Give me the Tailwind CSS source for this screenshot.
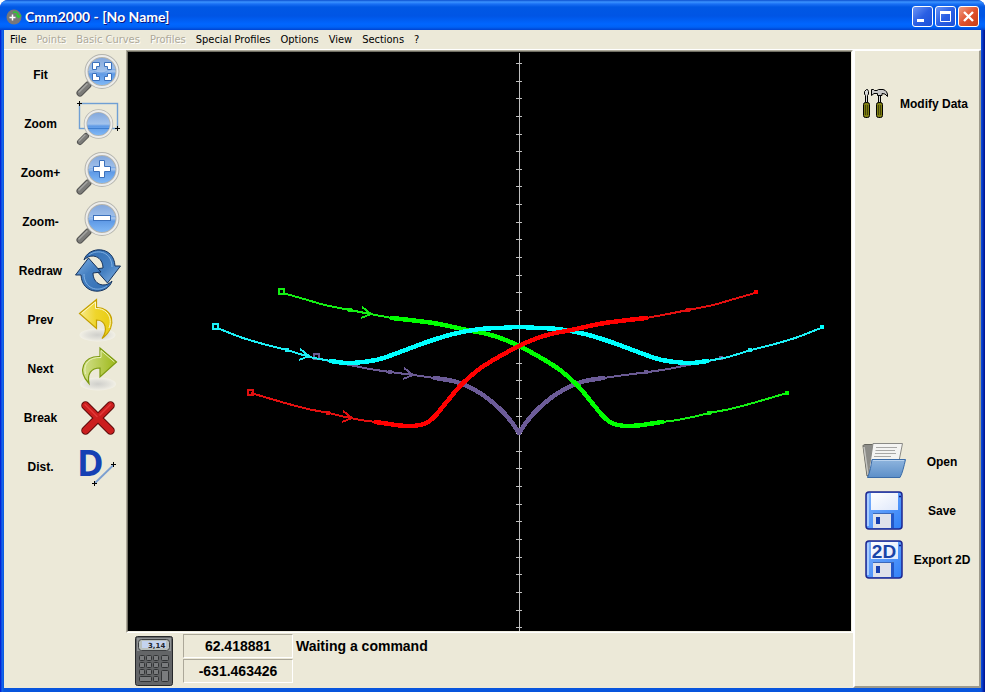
<!DOCTYPE html>
<html lang="en">
<head>
    <meta charset="UTF-8">
    <meta name="viewport" content="width=device-width, initial-scale=1.0">
    <title>Cmm2000 - [No Name]</title>
    <script src="https://cdn.jsdelivr.net/npm/@tailwindcss/browser@4"></script>
</head>
<body class="bg-white font-['Liberation_Sans',Arial,sans-serif] text-black">

    <!-- Shared gradients and symbols -->
    <svg class="absolute h-0 w-0" aria-hidden="true">
        <defs>
            <linearGradient id="glass" x1="0" y1="0" x2="0" y2="1">
                <stop offset="0" stop-color="#7fa4da"/>
                <stop offset=".5" stop-color="#a3c3ec"/>
                <stop offset=".58" stop-color="#5f9ae6"/>
                <stop offset="1" stop-color="#86bdf8"/>
            </linearGradient>
            <linearGradient id="blueArrow" x1="0" y1="0" x2="1" y2="1">
                <stop offset="0" stop-color="#2f6bb0"/>
                <stop offset=".6" stop-color="#4580c2"/>
                <stop offset="1" stop-color="#86b4e4"/>
            </linearGradient>
            <linearGradient id="yellowArrow" x1="0" y1="0" x2="1" y2="0">
                <stop offset="0" stop-color="#f8ea8c"/>
                <stop offset=".5" stop-color="#efd52c"/>
                <stop offset="1" stop-color="#e8cc10"/>
            </linearGradient>
            <linearGradient id="greenArrow" x1="0" y1="0" x2="1" y2="0">
                <stop offset="0" stop-color="#d3e08c"/>
                <stop offset="1" stop-color="#9cb818"/>
            </linearGradient>
            <linearGradient id="folderFront" x1="0" y1="0" x2="0" y2="1">
                <stop offset="0" stop-color="#8fb5de"/>
                <stop offset="1" stop-color="#5c8fc8"/>
            </linearGradient>
            <linearGradient id="disk" x1="0" y1="0" x2="1" y2="1">
                <stop offset="0" stop-color="#7fb2fc"/>
                <stop offset="1" stop-color="#2f80f8"/>
            </linearGradient>
            <linearGradient id="paper" x1="0" y1="0" x2="1" y2="1">
                <stop offset="0" stop-color="#ffffff"/>
                <stop offset="1" stop-color="#dfe8fb"/>
            </linearGradient>
            <radialGradient id="shade">
                <stop offset="0" stop-color="#cfcfcb"/>
                <stop offset=".6" stop-color="#e2e1da"/>
                <stop offset="1" stop-color="#f2f0e6"/>
            </radialGradient>
            <symbol id="lens" viewBox="0 0 46 49">
                <path d="M13 34L5 42" stroke="#555553" stroke-width="7" stroke-linecap="round"/>
                <path d="M13 34L5 42" stroke="#7c7c79" stroke-width="5" stroke-linecap="round"/>
                <path d="M12 33L4 41" stroke="#a5a5a2" stroke-width="1.500" stroke-linecap="round"/>
                <circle cx="27" cy="20.500" r="15.500" fill="url(#glass)" stroke="#b4b4ae" stroke-width="4"/>
                <circle cx="27" cy="20.500" r="15.500" fill="none" stroke="#ececea" stroke-width="2"/>
                <path d="M13 21C18 17 23 24 28 22S37 17 41 19" fill="none" stroke="#5b95e2" stroke-width="1" opacity=".5"/>
            </symbol>
            <symbol id="floppy" viewBox="0 0 46 49">
                <rect x="5" y="6" width="36" height="37" rx="3" fill="url(#disk)" stroke="#1c2690" stroke-width="1.500"/>
                <path d="M7 8V40" stroke="#a8ccff" stroke-width="2"/>
                <rect x="12" y="28" width="20" height="14" fill="#dfe2ea"/>
                <path d="M12 27.500H33" stroke="#3c68b8"/>
                <rect x="15" y="31" width="4" height="7" fill="#1840b0"/>
                <rect x="30" y="28" width="3" height="14" fill="#2458c8"/>
                <path d="M38 10.500H40" stroke="#141c80" stroke-width="1.500"/>
            </symbol>
        </defs>
    </svg>

    <div class="flex min-h-screen flex-col rounded-t-lg bg-[linear-gradient(90deg,#0019cf_0,#0831d9_1px,#166aee_2px,#0855dd_4px,#0855dd_calc(100%-4px),#0b3fd0_calc(100%-3px),#001ea0_calc(100%-1px),#00138c_100%)]">

        <header class="flex h-[30px] shrink-0 items-center rounded-t-lg bg-[linear-gradient(180deg,#0b4fcf_0,#3b93ff_2px,#1a70f4_4px,#0058e4_7px,#0055e5_16px,#0066ff_24px,#0062f6_27px,#0043cf_30px)] pr-[6px] pl-[6px]">
            <svg class="mt-[3px] h-4 w-4" viewBox="0 0 16 16">
                <circle cx="8" cy="8" r="7.500" fill="#77777a"/>
                <path d="M6.500 5.500v6M3.500 8.500h6" stroke="#fff" stroke-width="1.500"/>
                <path d="M7 3.500C10 2 12.500 4 12.500 8M10 6L12.500 8.500L15 6" fill="none" stroke="#2fc832" stroke-width="1.500"/>
            </svg>
            <h1 class="ml-[3px] flex-1 pt-1 font-[Lato,'Open_Sans',sans-serif] text-[14px] leading-5 font-bold text-white [text-shadow:1px_1px_0_#0a1883]">Cmm2000 - [No Name]</h1>
            <div class="flex gap-[2px] pt-[3px]">
                <button type="button" aria-label="Minimize" class="h-[21px] w-[21px] rounded-[3px] border border-white bg-linear-to-br from-[#6c94f4] via-[#2a5fe4] to-[#1c50d8]">
                    <svg viewBox="0 0 19 19"><path d="M4 13.500H11" stroke="#fff" stroke-width="3"/></svg>
                </button>
                <button type="button" aria-label="Maximize" class="h-[21px] w-[21px] rounded-[3px] border border-white bg-linear-to-br from-[#6c94f4] via-[#2a5fe4] to-[#1c50d8]">
                    <svg viewBox="0 0 19 19"><path d="M4.500 5V14.500H14.500V5" fill="none" stroke="#fff"/><path d="M4 5.500H15" stroke="#fff" stroke-width="3"/></svg>
                </button>
                <button type="button" aria-label="Close" class="h-[21px] w-[21px] rounded-[3px] border border-white bg-linear-to-br from-[#ee9a80] via-[#e0512c] to-[#c83c14]">
                    <svg viewBox="0 0 19 19"><path d="M5 5L14 14M14 5L5 14" stroke="#fff" stroke-width="2.400"/></svg>
                </button>
            </div>
        </header>

        <div class="mx-1 mb-1 flex flex-1 flex-col bg-[#ece9d8]">

            <nav class="flex h-[20px] shrink-0 items-center gap-2.5 border-b border-white pl-[6px] font-['DejaVu_Sans_Condensed','DejaVu_Sans',sans-serif] text-[11px] leading-4">
                <button type="button">File</button>
                <button type="button" disabled class="text-[#aca899] [text-shadow:1px_1px_0_#fff]">Points</button>
                <button type="button" disabled class="text-[#aca899] [text-shadow:1px_1px_0_#fff]">Basic Curves</button>
                <button type="button" disabled class="text-[#aca899] [text-shadow:1px_1px_0_#fff]">Profiles</button>
                <button type="button">Special Profiles</button>
                <button type="button">Options</button>
                <button type="button">View</button>
                <button type="button">Sections</button>
                <button type="button">?</button>
            </nav>

            <main class="flex flex-1">

                <!-- View tools -->
                <div class="flex w-[122px] shrink-0 flex-col pt-px text-[12px] leading-4 font-bold">
                    <button type="button" class="flex h-[49px] items-center">
                        <span class="w-[71px] pb-[2px] pl-[2px]">Fit</span>
                        <svg class="h-[49px] w-[46px]" viewBox="0 0 46 49">
                            <use href="#lens"/>
                            <path d="M17.500 11.500H24.500V15.500H21.500V18.500H17.500ZM29.500 11.500H36.500V18.500H32.500V15.500H29.500ZM36.500 22.500V29.500H29.500V25.500H32.500V22.500ZM24.500 29.500H17.500V22.500H21.500V25.500H24.500Z" fill="#fff" stroke="#3a70bc"/>
                        </svg>
                    </button>
                    <button type="button" class="flex h-[49px] items-center">
                        <span class="w-[71px] pb-[2px] pl-[2px]">Zoom</span>
                        <svg class="h-[49px] w-[46px]" viewBox="0 0 46 49">
                            <rect x="4.500" y="3.500" width="38" height="25" fill="none" stroke="#6f9fd4" stroke-width="1.400"/>
                            <path d="M11 36L5 42" stroke="#555553" stroke-width="6" stroke-linecap="round"/>
                            <path d="M11 36L5 42" stroke="#7c7c79" stroke-width="4" stroke-linecap="round"/>
                            <path d="M10 35L4 41" stroke="#a5a5a2" stroke-width="1.300" stroke-linecap="round"/>
                            <circle cx="23.500" cy="24" r="13" fill="url(#glass)" stroke="#b4b4ae" stroke-width="3.500"/>
                            <circle cx="23.500" cy="24" r="13" fill="none" stroke="#ececea" stroke-width="2"/>
                            <path d="M13 28.500H34" stroke="#3f7fd0"/>
                            <path d="M2 3.500H7M4.500 1V6M40 28.500H45M42.500 26V31" stroke="#000"/>
                        </svg>
                    </button>
                    <button type="button" class="flex h-[49px] items-center">
                        <span class="w-[71px] pb-[2px] pl-[2px]">Zoom+</span>
                        <svg class="h-[49px] w-[46px]" viewBox="0 0 46 49">
                            <use href="#lens"/>
                            <path d="M24.500 11.500H29.500V17.500H35.500V22.500H29.500V28.500H24.500V22.500H18.500V17.500H24.500Z" fill="#fff" stroke="#3a70bc"/>
                        </svg>
                    </button>
                    <button type="button" class="flex h-[49px] items-center">
                        <span class="w-[71px] pb-[2px] pl-[2px]">Zoom-</span>
                        <svg class="h-[49px] w-[46px]" viewBox="0 0 46 49">
                            <use href="#lens"/>
                            <rect x="18.500" y="17.500" width="17" height="5" fill="#fff" stroke="#3a70bc"/>
                        </svg>
                    </button>
                    <button type="button" class="flex h-[49px] items-center">
                        <span class="w-[71px] pb-[2px] pl-[2px]">Redraw</span>
                        <svg class="h-[49px] w-[46px]" viewBox="0 0 46 49">
                            <g fill="url(#blueArrow)" stroke="#16335c" stroke-linejoin="round">
                                <path d="M9 13C13 -1 39 -2 40 19L45.500 19L32.500 36L20 22L28 21C28 10 17 5 9 13Z"/>
                                <path d="M9 13C13 -1 39 -2 40 19L45.500 19L32.500 36L20 22L28 21C28 10 17 5 9 13Z" transform="rotate(180 23 23.500)"/>
                            </g>
                            <path d="M14 8C24 1 37 6 37 20M32 39C22 46 9 41 9 27" fill="none" stroke="#8fbbe8" opacity=".8"/>
                        </svg>
                    </button>
                    <button type="button" class="flex h-[49px] items-center">
                        <span class="w-[71px] pb-[2px] pl-[2px]">Prev</span>
                        <svg class="h-[49px] w-[46px]" viewBox="0 0 46 49">
                            <ellipse cx="22.500" cy="39" rx="18" ry="6.500" fill="url(#shade)"/>
                            <path d="M4.500 17.500L21.500 3.500V11.500C37 11 44 30 27 42.500C33 34 31 24 21.500 24V32.500Z" fill="url(#yellowArrow)" stroke="#c4a000" stroke-width="1.200"/>
                            <path d="M6.500 17.500L20.500 6V12.500C32 12 38 22 34 32" fill="none" stroke="#fdf6c4"/>
                        </svg>
                    </button>
                    <button type="button" class="flex h-[49px] items-center">
                        <span class="w-[71px] pb-[2px] pl-[2px]">Next</span>
                        <svg class="h-[49px] w-[46px]" viewBox="0 0 46 49">
                            <ellipse cx="23" cy="39" rx="18" ry="6.500" fill="url(#shade)"/>
                            <path d="M41.500 17L25 3V11.500C8 11 2 26 14 38.500C12 29 16 23 25 23V32Z" fill="url(#greenArrow)" stroke="#7d9a10" stroke-width="1.200"/>
                            <path d="M39.500 17L26 5.500V12.500C14 12 8 19 10.500 29" fill="none" stroke="#e8f0b8"/>
                        </svg>
                    </button>
                    <button type="button" class="flex h-[49px] items-center">
                        <span class="w-[71px] pb-[2px] pl-[2px]">Break</span>
                        <svg class="h-[49px] w-[46px]" viewBox="0 0 46 49">
                            <g fill="none" stroke-linecap="round">
                                <path d="M10.500 11.500L35.500 36.500M35.500 11.500L10.500 36.500" stroke="#5e0c0c" stroke-width="8.500"/>
                                <path d="M10.500 11.500L35.500 36.500M35.500 11.500L10.500 36.500" stroke="#cb1e1e" stroke-width="6.500"/>
                                <path d="M10 10.500L22 22.500M35.500 10.500L25 21" stroke="#e23a3a" stroke-width="1.500"/>
                            </g>
                        </svg>
                    </button>
                    <button type="button" class="flex h-[49px] items-center">
                        <span class="w-[71px] pb-[2px] pl-[2px]">Dist.</span>
                        <svg class="h-[49px] w-[46px] overflow-visible" viewBox="0 0 46 49">
                            <text x="2" y="33" font-family="Open Sans, Noto Sans, sans-serif" font-size="36" font-weight="700" fill="#1540b4">D</text>
                            <path d="M19.500 40.500L38.500 22" stroke="#7b9fd0" stroke-width="1.800"/>
                            <path d="M17 40.500H22M19.500 38V43M36 21.500H41M38.500 19V24" stroke="#000"/>
                        </svg>
                    </button>
                </div>

                <!-- Drawing area and status line -->
                <div class="flex min-w-0 flex-1 flex-col">
                    <div class="flex min-h-0 flex-1 border border-t-[#aca899] border-r-white border-b-white border-l-[#aca899]">
                        <div class="flex min-h-0 flex-1 border border-t-[#716f64] border-r-[#f1efe2] border-b-[#f1efe2] border-l-[#716f64] bg-black">
                            <svg id="drawing" class="w-full" viewBox="128 52 723 579" fill="none" shape-rendering="crispEdges"></svg>
                        </div>
                    </div>
                    <div class="flex h-[55px] shrink-0 items-start pl-[9px] text-[14px] leading-[22px] font-bold">
                        <button type="button" aria-label="Calculator" class="mt-[3px] h-[50px] w-[38px]">
                            <svg class="h-[50px] w-[38px]" viewBox="0 0 38 50">
                                <rect x=".5" y=".5" width="37" height="49" rx="2" fill="#636567" stroke="#26282a"/>
                                <path d="M2 2H36V15H2Z" fill="#8f9294"/>
                                <rect x="3.500" y="3.500" width="31" height="11" rx="3" fill="#b9c0bd" stroke="#3c3e40"/>
                                <rect x="7" y="5" width="24" height="7" fill="#c3d3ee"/>
                                <text x="13" y="11.500" font-family="DejaVu Sans, sans-serif" font-size="7" font-weight="700" fill="#20242a">3,14</text>
                                <g fill="#7a7c7e" stroke="#323436">
                                    <rect x="4.500" y="19.500" width="5" height="5" rx="1"/><rect x="11.500" y="19.500" width="5" height="5" rx="1"/><rect x="18.500" y="19.500" width="5" height="5" rx="1"/>
                                    <rect x="4.500" y="26.500" width="5" height="5" rx="1"/><rect x="11.500" y="26.500" width="5" height="5" rx="1"/><rect x="18.500" y="26.500" width="5" height="5" rx="1"/>
                                    <rect x="4.500" y="33.500" width="5" height="5" rx="1"/><rect x="11.500" y="33.500" width="5" height="5" rx="1"/><rect x="18.500" y="33.500" width="5" height="5" rx="1"/>
                                    <rect x="4.500" y="40.500" width="12" height="5" rx="1"/><rect x="18.500" y="40.500" width="5" height="5" rx="1"/>
                                    <rect x="26.500" y="19.500" width="7" height="5" rx="1"/><rect x="26.500" y="26.500" width="7" height="5" rx="1"/>
                                    <rect x="26.500" y="34.500" width="7" height="11" rx="1"/>
                                </g>
                            </svg>
                        </button>
                        <div class="ml-[10px] flex w-[110px] flex-col gap-px pt-px text-center">
                            <output class="block border border-t-[#aca899] border-r-white border-b-white border-l-[#aca899]">62.418881</output>
                            <output class="block border border-t-[#aca899] border-r-white border-b-white border-l-[#aca899]">-631.463426</output>
                        </div>
                        <p class="pt-[2px] pl-[3px]">Waiting a command</p>
                    </div>
                </div>

                <!-- File tools -->
                <div class="flex w-[128px] shrink-0 flex-col border-t border-r-2 border-b-2 border-l-2 border-t-white border-r-[#9d9a8c] border-b-[#9d9a8c] border-l-white pt-[28px] pl-[6px] text-[12px] leading-4 font-bold">
                    <button type="button" class="flex h-[49px] items-center">
                        <svg class="h-[49px] w-[30px]" viewBox="0 0 30 49">
                            <path d="M5.500 10.500H6.500L7.500 12.500V15L6.500 16.500V23.500H4.500V16.500L3.500 15V12.500Z" fill="#d8d8d8" stroke="#000"/>
                            <path d="M17.500 16V24H19.500V16Z" fill="#d8d8d8" stroke="#000"/>
                            <path d="M10.500 10.500H12.500L13.500 11.500H16L17.500 10.500H22C25 11 27 14 26.500 17.500L24 15L21 14.500V16.500H16.500V14.500H13L10.500 16.500Z" fill="#c8c8c8" stroke="#000"/>
                            <rect x="2.500" y="23.500" width="6" height="15" rx="2" fill="#7f7f10" stroke="#000"/>
                            <rect x="15.500" y="23.500" width="6" height="15" rx="2" fill="#7f7f10" stroke="#000"/>
                            <path d="M4.500 26V36M6.500 26V36M17.500 26V36M19.500 26V36" stroke="#45450a"/>
                        </svg>
                        <span class="w-[86px]">Modify Data</span>
                    </button>
                    <button type="button" class="mt-[309px] flex h-[49px] items-center">
                        <svg class="h-[49px] w-[46px]" viewBox="0 0 46 49">
                            <path d="M2 9C2 8 3 7.500 4 7.500H38L37 39H6Z" fill="#8c8c88" stroke="#66665f"/>
                            <path d="M3 10L7 38" stroke="#c4c4c0" stroke-width="1.500"/>
                            <path d="M12 6.500H41.500L38 24L8 33Z" fill="#f4f4f2" stroke="#8a8a86"/>
                            <path d="M15 10.500H36M14.500 13.500H34M14 16.500H35M13 19.500H30" stroke="#a8a8a6"/>
                            <path d="M11 22.500H44.500C43 29 41.500 36 39 40.500H6.500C9 35 10 29 11 22.500Z" fill="url(#folderFront)" stroke="#3b6ca8"/>
                            <path d="M12 23.500H43" stroke="#b8d2ee"/>
                        </svg>
                        <span class="w-[70px]">Open</span>
                    </button>
                    <button type="button" class="flex h-[49px] items-center">
                        <svg class="h-[49px] w-[46px]" viewBox="0 0 46 49">
                            <use href="#floppy"/>
                            <rect x="10" y="7" width="27" height="17" fill="url(#paper)"/>
                        </svg>
                        <span class="w-[70px]">Save</span>
                    </button>
                    <button type="button" class="flex h-[49px] items-center">
                        <svg class="h-[49px] w-[46px]" viewBox="0 0 46 49">
                            <use href="#floppy"/>
                            <rect x="10" y="7" width="27" height="17" fill="url(#paper)"/>
                            <text x="23" y="23" text-anchor="middle" font-family="Liberation Sans, Arial, sans-serif" font-size="19" font-weight="700" fill="#1a44a8">2D</text>
                        </svg>
                        <span class="w-[70px]">Export 2D</span>
                    </button>
                </div>
            </main>
        </div>
    </div>

    <script>
        const AXIS_X = 519;

        // Profiles: lead-in (thin), body (thick), lead-out (thin)
        const green = {
            leadIn: [[283, 293], [304, 299], [325, 305], [350, 310], [370, 314], [392, 318]],
            body: [[392, 318], [433, 323], [467, 330], [487, 334], [503, 339], [519, 346], [543, 359], [560, 370], [577, 385], [593, 404], [602, 415], [610, 422], [618, 425], [629, 426], [642, 425], [662, 422]],
            leadOut: [[662, 422], [677, 420], [697, 416], [709, 413], [730, 409], [753, 403], [787, 393]]
        };
        const cyanHalf = {
            leadIn: [[217, 328], [243, 338], [267, 345], [287, 350], [310, 357], [331, 361]],
            body: [[331, 361], [346, 363], [363, 362], [380, 359], [400, 352], [427, 342], [453, 334], [480, 329], [500, 328], [519, 327]]
        };
        const purpleHalf = {
            leadIn: [[319, 359], [350, 365], [370, 369], [390, 372], [413, 375], [435, 378]],
            body: [[435, 378], [453, 381], [467, 386], [483, 395], [500, 409], [510, 420], [519, 433]]
        };

        const mirror = pts => pts.map(([x, y]) => [2 * AXIS_X - x, y]).reverse();

        const profiles = [
            { thin: '#6a5a94', thick: '#6b5b97', start: [317, 357], end: [721, 358], marks: [[390, 372], [646, 372]], arrow: [413, 375],
              leadIn: purpleHalf.leadIn, body: [...purpleHalf.body, ...mirror(purpleHalf.body).slice(1)], leadOut: mirror(purpleHalf.leadIn) },
            { thin: '#14f014', thick: '#00ff00', start: [282, 292], end: [787, 393], marks: [[350, 310], [709, 413]], arrow: [371, 314], ...green },
            { thin: '#1cf0f6', thick: '#00ffff', start: [216, 327], end: [822, 327], marks: [[287, 350], [750, 350]], arrow: [309, 356],
              leadIn: cyanHalf.leadIn, body: [...cyanHalf.body, ...mirror(cyanHalf.body).slice(1)], leadOut: mirror(cyanHalf.leadIn) },
            { thin: '#e21010', thick: '#ff0000', start: [251, 393], end: [756, 292], marks: [[328, 413], [688, 310]], arrow: [352, 418],
              leadIn: mirror(green.leadOut), body: mirror(green.body), leadOut: mirror(green.leadIn) }
        ];

        // Catmull-Rom spline through the points
        function spline(pts) {
            let d = `M${pts[0]}`;
            for (let i = 0; i < pts.length - 1; i++) {
                const p0 = pts[i - 1] || pts[i], p1 = pts[i], p2 = pts[i + 1], p3 = pts[i + 2] || p2;
                // the purple profile has a cusp on the axis
                const cusp = p => p[0] === AXIS_X && p[1] === 433;
                const c1 = cusp(p1) ? p1 : [p1[0] + (p2[0] - p0[0]) / 6, p1[1] + (p2[1] - p0[1]) / 6];
                const c2 = cusp(p2) ? p2 : [p2[0] - (p3[0] - p1[0]) / 6, p2[1] - (p3[1] - p1[1]) / 6];
                d += `C${c1} ${c2} ${p2}`;
            }
            return d;
        }

        let out = `<path d="M519.5 53V631" stroke="#c0c0c0"/>`;
        for (let i = 0; i <= 32; i++) {
            const y = Math.round(63 + i * 17.63) + 0.5;
            out += `<path d="M516 ${y}H522" stroke="#c0c0c0"/>`;
        }

        profiles.forEach(p => {
            const [sx, sy] = p.start, [ex, ey] = p.end, [ax, ay] = p.arrow;
            out += `<path d="${spline(p.leadIn)}" stroke="${p.thin}" stroke-width="2"/>`;
            out += `<path d="${spline(p.leadOut)}" stroke="${p.thin}" stroke-width="2"/>`;
            out += `<path d="${spline(p.body)}" stroke="${p.thick}" stroke-width="4.5" stroke-linecap="round" stroke-linejoin="round"/>`;
            out += `<rect x="${sx - 3}" y="${sy - 3}" width="5" height="5" stroke="${p.thin}" stroke-width="2"/>`;
            out += `<rect x="${ex - 2}" y="${ey - 2}" width="4" height="4" fill="${p.thick}"/>`;
            out += `<path d="M${ax - 9} ${ay - 7}L${ax} ${ay}L${ax - 10} ${ay + 4}" stroke="${p.thin}" stroke-width="2" stroke-linejoin="round"/>`;
            p.marks.forEach(([x, y]) => {
                out += `<rect x="${x - 2}" y="${y - 2}" width="4" height="4" fill="${p.thin}"/>`;
            });
        });

        document.getElementById('drawing').innerHTML = out;
    </script>
</body>
</html>
